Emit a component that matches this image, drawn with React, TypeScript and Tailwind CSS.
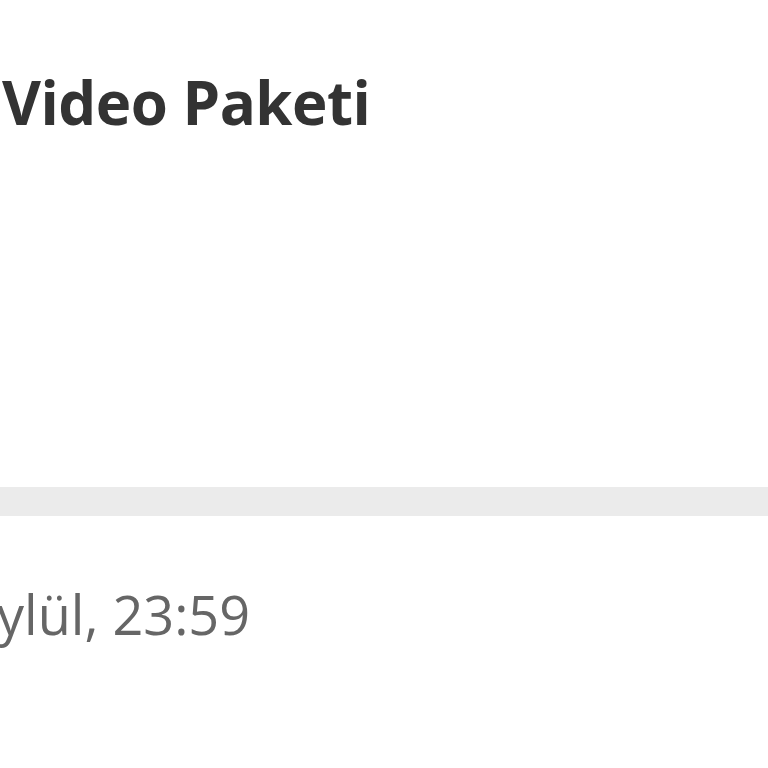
import React from 'react';

const font = { fontFamily: '"Open Sans", "Noto Sans", sans-serif' };

export default function App() {
  return (
    <div className="w-[768px] h-[768px] bg-white overflow-hidden flex flex-col" style={font}>
      {/* Package title */}
      <div className="h-[487px] pt-[62px] pl-[2px]">
        <h1 className="text-[60px] leading-[80px] font-bold text-[#333333] whitespace-nowrap tracking-[-0.5px]">
          Video Paketi
        </h1>
      </div>

      {/* Divider */}
      <div className="h-[29px] bg-[#ebebeb]" />

      {/* Expiry */}
      <div className="pt-[58px] -ml-[3px]">
        <p className="text-[54px] leading-[80px] text-[#666666] whitespace-nowrap">
          ylül, 23:59
        </p>
      </div>
    </div>
  );
}
